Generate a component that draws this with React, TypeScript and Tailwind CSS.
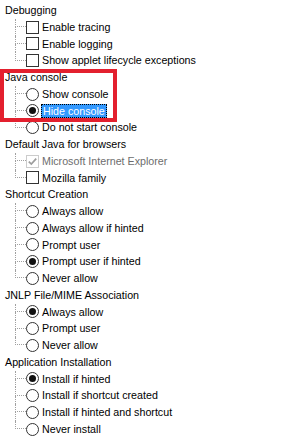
type Item = {
  label: string
  checked?: boolean
  disabled?: boolean
  selected?: boolean
}

type Group = {
  title: string
  kind: 'check' | 'radio'
  items: Item[]
}

const groups: Group[] = [
  {
    title: 'Debugging',
    kind: 'check',
    items: [
      { label: 'Enable tracing' },
      { label: 'Enable logging' },
      { label: 'Show applet lifecycle exceptions' },
    ],
  },
  {
    title: 'Java console',
    kind: 'radio',
    items: [
      { label: 'Show console' },
      { label: 'Hide console', checked: true, selected: true },
      { label: 'Do not start console' },
    ],
  },
  {
    title: 'Default Java for browsers',
    kind: 'check',
    items: [
      { label: 'Microsoft Internet Explorer', checked: true, disabled: true },
      { label: 'Mozilla family' },
    ],
  },
  {
    title: 'Shortcut Creation',
    kind: 'radio',
    items: [
      { label: 'Always allow' },
      { label: 'Always allow if hinted' },
      { label: 'Prompt user' },
      { label: 'Prompt user if hinted', checked: true },
      { label: 'Never allow' },
    ],
  },
  {
    title: 'JNLP File/MIME Association',
    kind: 'radio',
    items: [
      { label: 'Always allow', checked: true },
      { label: 'Prompt user' },
      { label: 'Never allow' },
    ],
  },
  {
    title: 'Application Installation',
    kind: 'radio',
    items: [
      { label: 'Install if hinted', checked: true },
      { label: 'Install if shortcut created' },
      { label: 'Install if hinted and shortcut' },
      { label: 'Never install' },
    ],
  },
]

function CheckBox({ checked, disabled }: { checked?: boolean; disabled?: boolean }) {
  return (
    <div
      className={`flex h-[13px] w-[13px] shrink-0 items-center justify-center border bg-white ${
        disabled ? 'border-[#cccccc]' : 'border-[#333333]'
      }`}
    >
      {checked && (
        <svg width="11" height="11" viewBox="0 0 11 11">
          <path
            d="M1.8 5.6 L4.3 8 L9.2 2.6"
            fill="none"
            stroke={disabled ? '#9d9d9d' : '#000'}
            strokeWidth="1.7"
          />
        </svg>
      )}
    </div>
  )
}

function Radio({ checked }: { checked?: boolean }) {
  return (
    <div className="flex h-[13px] w-[13px] shrink-0 items-center justify-center rounded-full border border-[#333333] bg-white">
      {checked && <div className="h-[7px] w-[7px] rounded-full bg-[#111]" />}
    </div>
  )
}

function Row({ item, kind, last }: { item: Item; kind: Group['kind']; last: boolean }) {
  return (
    <div className="flex h-[16.75px] items-center">
      {/* tree connector */}
      <div className="ml-[15px] flex h-full w-[11px] shrink-0 flex-col">
        <div className="h-1/2 border-b border-l border-dotted border-[#a0a0a0]" />
        <div className={`flex-1 ${last ? '' : 'border-l border-dotted border-[#a0a0a0]'}`} />
      </div>
      {kind === 'check' ? (
        <CheckBox checked={item.checked} disabled={item.disabled} />
      ) : (
        <Radio checked={item.checked} />
      )}
      {item.selected ? (
        <span className="ml-[2px] flex h-[14px] items-center border border-dotted border-black bg-[#3399ff] px-[1px] text-white">
          {item.label}
        </span>
      ) : (
        <span className={`ml-[3px] whitespace-nowrap ${item.disabled ? 'text-[#6d6d6d]' : 'text-black'}`}>
          {item.label}
        </span>
      )}
    </div>
  )
}

export default function App() {
  return (
    <div
      className="relative h-[439px] w-[295px] overflow-hidden bg-white pt-[2px] text-[10.7px] leading-none"
      style={{ fontFamily: '"Liberation Sans", Arial, sans-serif' }}
    >
      {groups.map((g) => (
        <div key={g.title}>
          <div className="flex h-[16.75px] items-center pl-[5px] whitespace-nowrap text-black">{g.title}</div>
          {g.items.map((item, i) => (
            <Row key={item.label} item={item} kind={g.kind} last={i === g.items.length - 1} />
          ))}
        </div>
      ))}

      {/* red annotation frame */}
      <div className="pointer-events-none absolute left-0 top-[69px] h-[53px] w-[117px] border-[4.5px] border-[#e3202e]" />
    </div>
  )
}
